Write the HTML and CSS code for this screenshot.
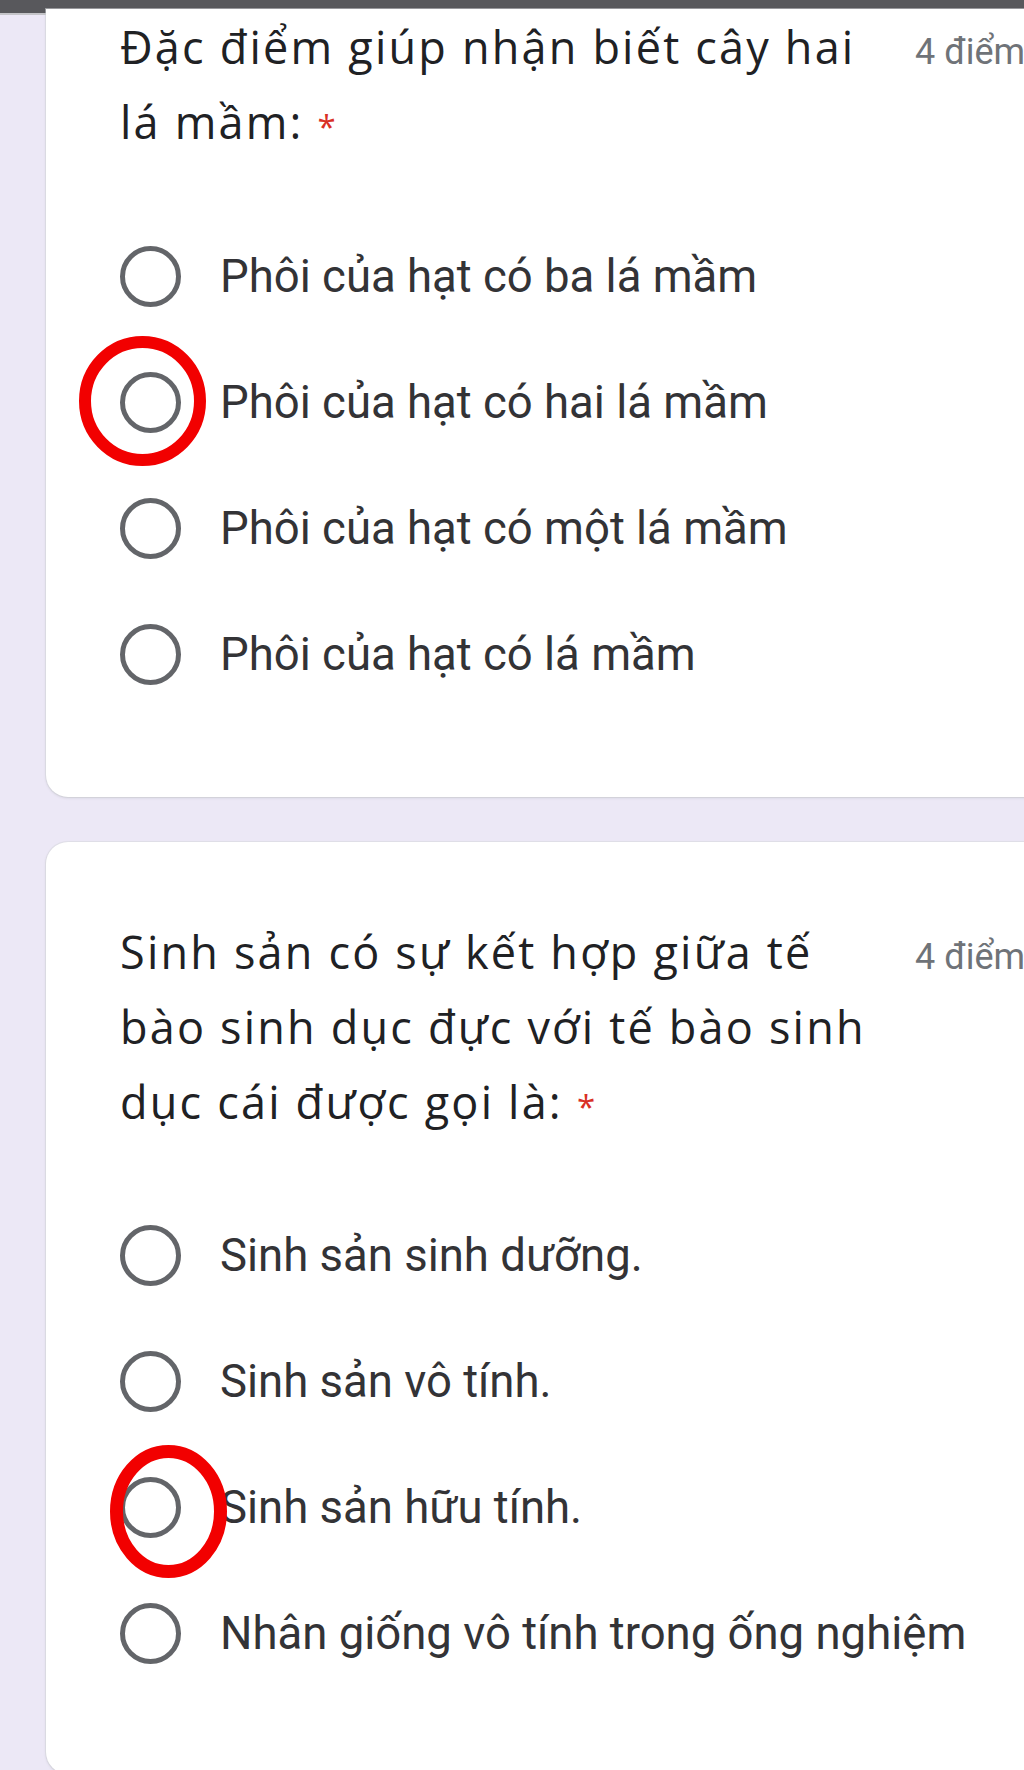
FILE: index.html
```html
<!DOCTYPE html>
<html lang="vi">
<head>
<meta charset="utf-8">
<title>Câu hỏi</title>
<link rel="stylesheet" href="styles.css">
</head>
<body>
<div class="topbar"></div>
<main class="page">
  <section class="card card-first">
    <div class="q-head">
      <h2 class="q-title">Đặc điểm giúp nhận biết cây hai lá mầm:<span class="req">*</span></h2>
      <span class="points">4 điểm</span>
    </div>
    <ul class="options">
      <li class="option"><span class="radio"></span><span class="label">Phôi của hạt có ba lá mầm</span></li>
      <li class="option">
        <span class="radio"></span><span class="label">Phôi của hạt có hai lá mầm</span>
        <svg class="mark mark-a" width="127" height="130" viewBox="0 0 127 130"><ellipse cx="63.5" cy="65" rx="57.5" ry="59" fill="none" stroke="#f20000" stroke-width="12"/></svg>
      </li>
      <li class="option"><span class="radio"></span><span class="label">Phôi của hạt có một lá mầm</span></li>
      <li class="option"><span class="radio"></span><span class="label">Phôi của hạt có lá mầm</span></li>
    </ul>
  </section>

  <section class="card card-last">
    <div class="q-head">
      <h2 class="q-title">Sinh sản có sự kết hợp giữa tế bào sinh dục đực với tế bào sinh dục cái được gọi là:<span class="req">*</span></h2>
      <span class="points">4 điểm</span>
    </div>
    <ul class="options">
      <li class="option"><span class="radio"></span><span class="label">Sinh sản sinh dưỡng.</span></li>
      <li class="option"><span class="radio"></span><span class="label">Sinh sản vô tính.</span></li>
      <li class="option">
        <span class="radio"></span><span class="label">Sinh sản hữu tính.</span>
        <svg class="mark mark-b" width="117" height="133" viewBox="0 0 117 133"><ellipse cx="58.5" cy="66.5" rx="52" ry="60" fill="none" stroke="#f20000" stroke-width="13"/></svg>
      </li>
      <li class="option"><span class="radio"></span><span class="label">Nhân giống vô tính trong ống nghiệm</span></li>
    </ul>
  </section>
</main>
</body>
</html>
```

FILE: styles.css
```css
html, body {
  margin: 0;
  padding: 0;
  width: 1024px;
  height: 1770px;
  overflow: hidden;
  background: #ece8f6;
}

.topbar {
  height: 13px;
  background: #58585c;
  border-bottom: 2px solid #c4c4c8;
}

.page {
  width: 1200px;
  padding-left: 46px;
}

.card {
  background: #ffffff;
  border-radius: 22px;
  box-shadow: 0 1px 3px rgba(60, 64, 67, 0.14), 0 0 0 1px rgba(218, 220, 224, 0.5);
  padding: 72px 0 80px 74px;
  margin-bottom: 45px;
}

.card-first {
  padding-top: 0;
  border-top-left-radius: 0;
  border-top-right-radius: 0;
}

.card-first .q-head {
  margin-top: -6px;
}

.card-last {
  padding-bottom: 78px;
}

.card-last .options {
  margin-top: 53px;
}

.q-head {
  display: flex;
  align-items: baseline;
}

.q-title {
  flex: 0 0 764px;
  margin: 0;
  font-family: "Open Sans", sans-serif;
  font-weight: 400;
  font-size: 45px;
  line-height: 75px;
  letter-spacing: 2.2px;
  color: #202124;
}

.req {
  margin-left: 14px;
  font-size: 33px;
  line-height: 1;
  color: #d93025;
  letter-spacing: 0;
}

.points {
  margin-left: 31px;
  font-family: Roboto, sans-serif;
  font-size: 36px;
  color: #6f7378;
  white-space: nowrap;
}

.options {
  list-style: none;
  margin: 54px 0 0 0;
  padding: 0;
}

.option {
  position: relative;
  height: 126px;
  display: flex;
  align-items: center;
}

.radio {
  box-sizing: border-box;
  width: 61px;
  height: 61px;
  border: 5px solid #636569;
  border-radius: 50%;
  flex: 0 0 61px;
}

.label {
  margin-left: 39px;
  font-family: Roboto, sans-serif;
  font-size: 45.5px;
  color: #333336;
  white-space: nowrap;
}

.mark {
  position: absolute;
  z-index: 2;
}

.mark-a {
  left: -41px;
  top: -3px;
}

.mark-b {
  left: -10px;
  top: 1px;
}
```
